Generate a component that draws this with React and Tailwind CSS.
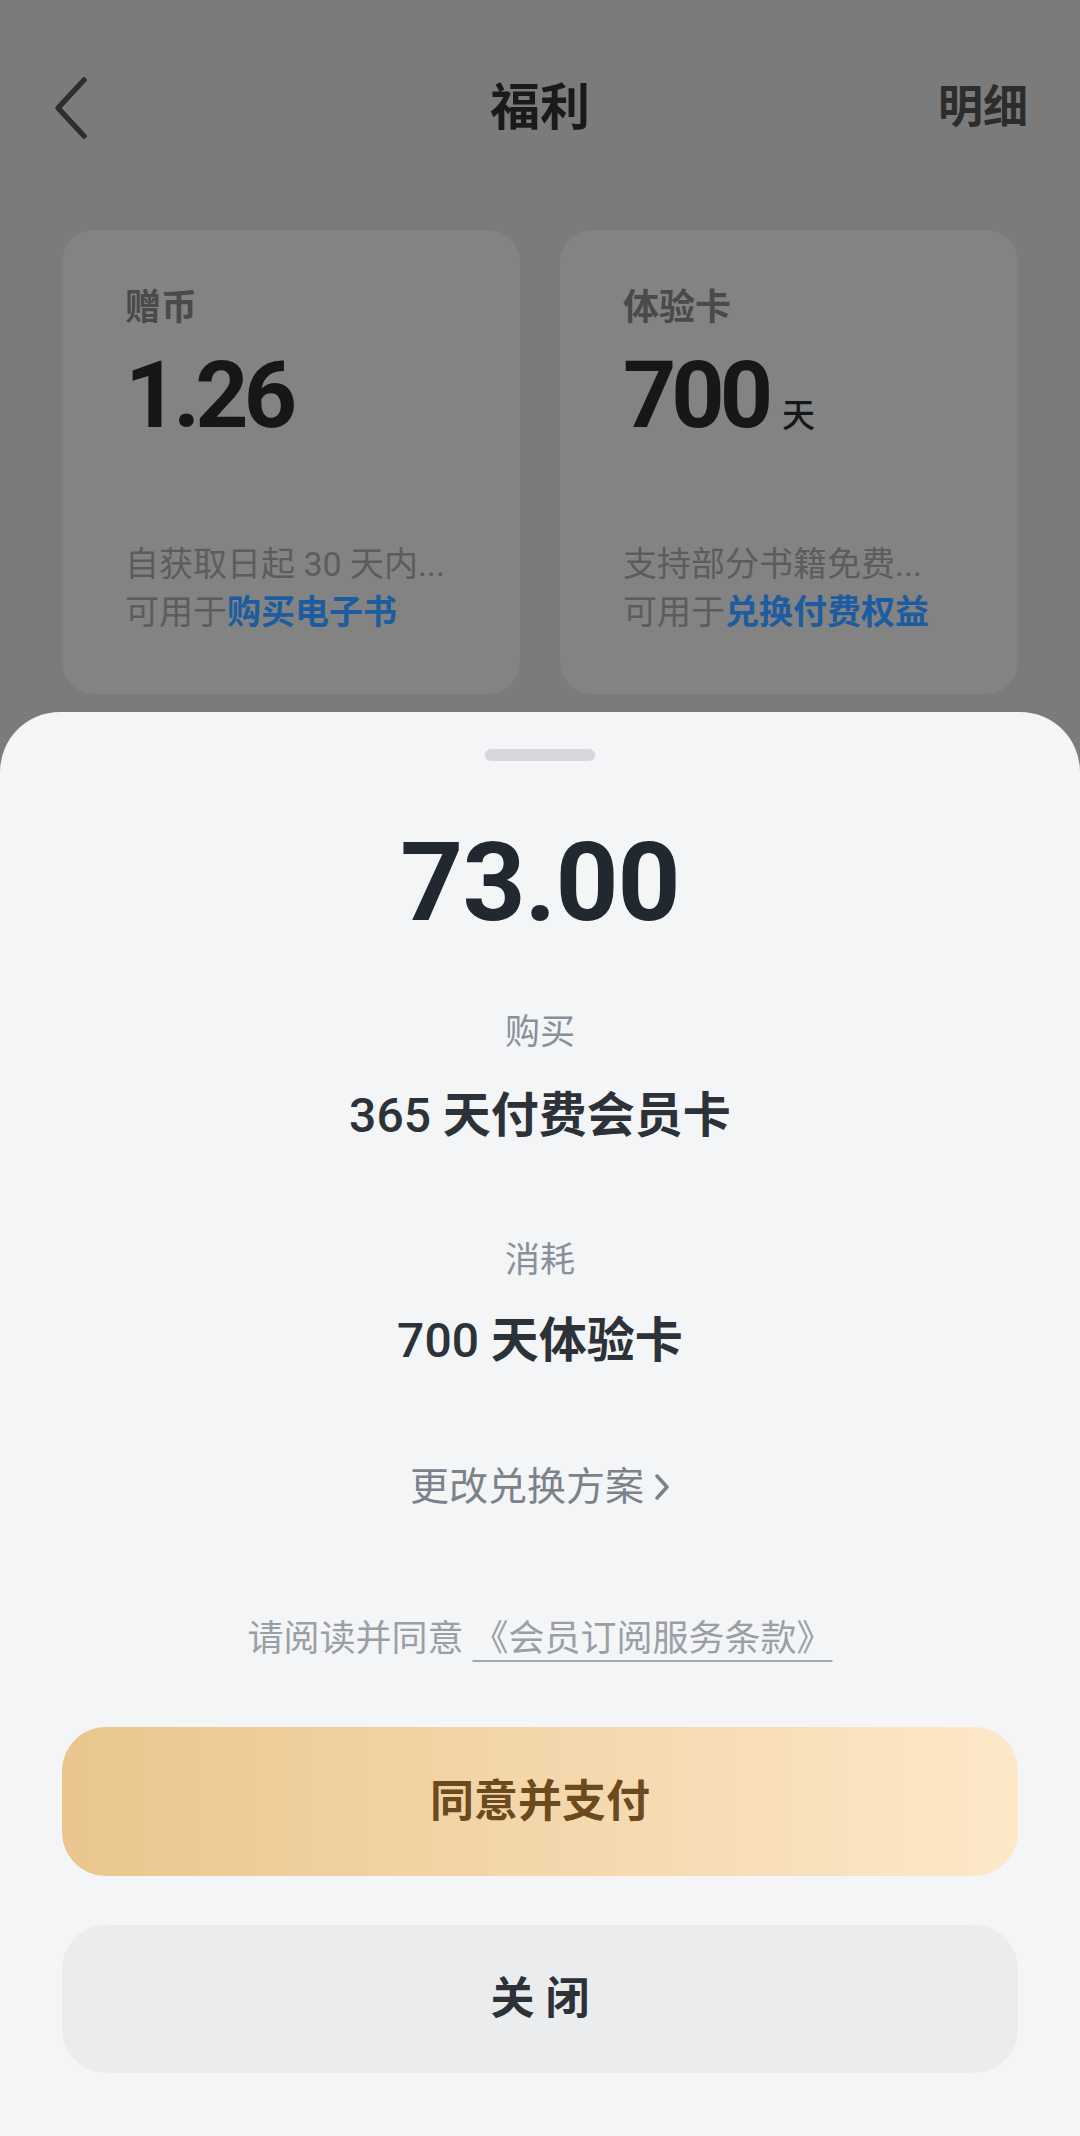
import React from 'react';

const cjk = { fontFamily: '"Roboto", "Noto Sans CJK SC", sans-serif' };

function BackIcon() {
  return (
    <svg width="40" height="64" viewBox="0 0 40 64" fill="none">
      <path d="M34 4 L8 32 L34 60" stroke="#2e2e2e" strokeWidth="5.5" strokeLinecap="round" strokeLinejoin="round" />
    </svg>
  );
}

function BenefitCard({ label, value, unit, desc, useFor }) {
  return (
    <div className="flex-1 h-[464px] rounded-[32px] bg-[#838383] pl-[63px] pr-[30px] pt-[56px]">
      <div className="text-[36px] leading-[44px] font-semibold text-[#4a4a4a]">{label}</div>
      <div className="mt-[19px] flex items-baseline">
        <span className="text-[93px] leading-[93px] font-bold tracking-[-5px] text-[#151719]">{value}</span>
        {unit && <span className="ml-[14px] text-[33px] font-medium text-[#151719]">{unit}</span>}
      </div>
      <div className="mt-[98px] text-[34px] leading-[48px] text-[#5c5c5c] whitespace-nowrap">{desc}</div>
      <div className="text-[34px] leading-[48px] text-[#5c5c5c] whitespace-nowrap">
        可用于<span className="font-bold text-[#1d5c9e]">{useFor}</span>
      </div>
    </div>
  );
}

export default function App() {
  return (
    <div className="relative w-[1080px] h-[2136px] overflow-hidden bg-[#7b7b7b]" style={cjk}>
      {/* Page behind the sheet */}
      <div className="pt-[60px] h-[156px] px-[50px] flex items-start">
        <div className="h-[96px] w-full flex items-center justify-between">
          <div className="w-[120px] flex items-center">
            <BackIcon />
          </div>
          <div className="text-[50px] font-bold text-[#1a1a1a]">福利</div>
          <div className="w-[120px] text-right pr-[2px] text-[45px] font-semibold text-[#2d2d2d]">明细</div>
        </div>
      </div>

      <div className="mt-[74px] px-[62px] flex gap-[40px]">
        <BenefitCard label="赠币" value="1.26" desc="自获取日起 30 天内..." useFor="购买电子书" />
        <BenefitCard label="体验卡" value="700" unit="天" desc="支持部分书籍免费..." useFor="兑换付费权益" />
      </div>

      {/* Bottom sheet */}
      <div className="absolute left-0 right-0 top-[712px] bottom-0 rounded-t-[60px] bg-[#f3f5f7] flex flex-col items-center">
        <div className="mt-[37px] w-[110px] h-[12px] rounded-full bg-[#d5d7da]" />

        <div className="mt-[67px] text-[110px] leading-[110px] font-bold tracking-[-1px] text-[#212830]">73.00</div>

        <div className="mt-[73px] text-[35px] leading-[44px] text-[#8a9099]">购买</div>
        <div className="mt-[31px] text-[48px] leading-[60px] text-[#2d3238]">
          <span className="font-medium">365</span> <span className="font-bold">天付费会员卡</span>
        </div>

        <div className="mt-[93px] text-[35px] leading-[44px] text-[#8a9099]">消耗</div>
        <div className="mt-[28px] text-[48px] leading-[60px] text-[#2d3238]">
          <span className="font-medium">700</span> <span className="font-bold">天体验卡</span>
        </div>

        <div className="mt-[91px] flex items-center text-[39px] leading-[50px] text-[#7c828a]">
          更改兑换方案
          <svg className="ml-[10px]" width="16" height="28" viewBox="0 0 16 28" fill="none">
            <path d="M3 3 L13 14 L3 25" stroke="#7c828a" strokeWidth="3.5" strokeLinecap="round" strokeLinejoin="round" />
          </svg>
        </div>

        <div className="mt-[104px] text-[36px] leading-[46px] text-[#9a9fa6]">
          请阅读并同意{' '}
          <span className="underline decoration-2 decoration-[#a3a8ae] underline-offset-[9px]">《会员订阅服务条款》</span>
        </div>

        <button className="mt-[65px] w-[956px] h-[149px] rounded-[44px] bg-gradient-to-r from-[#eac68e] to-[#fde8c8] flex items-center justify-center text-[44px] font-bold text-[#6b4a1e]">
          同意并支付
        </button>

        <button className="mt-[49px] w-[956px] h-[148px] rounded-[44px] bg-[#ebecee] flex items-center justify-center text-[44px] font-bold text-[#2d3238]">
          关 闭
        </button>
      </div>
    </div>
  );
}
